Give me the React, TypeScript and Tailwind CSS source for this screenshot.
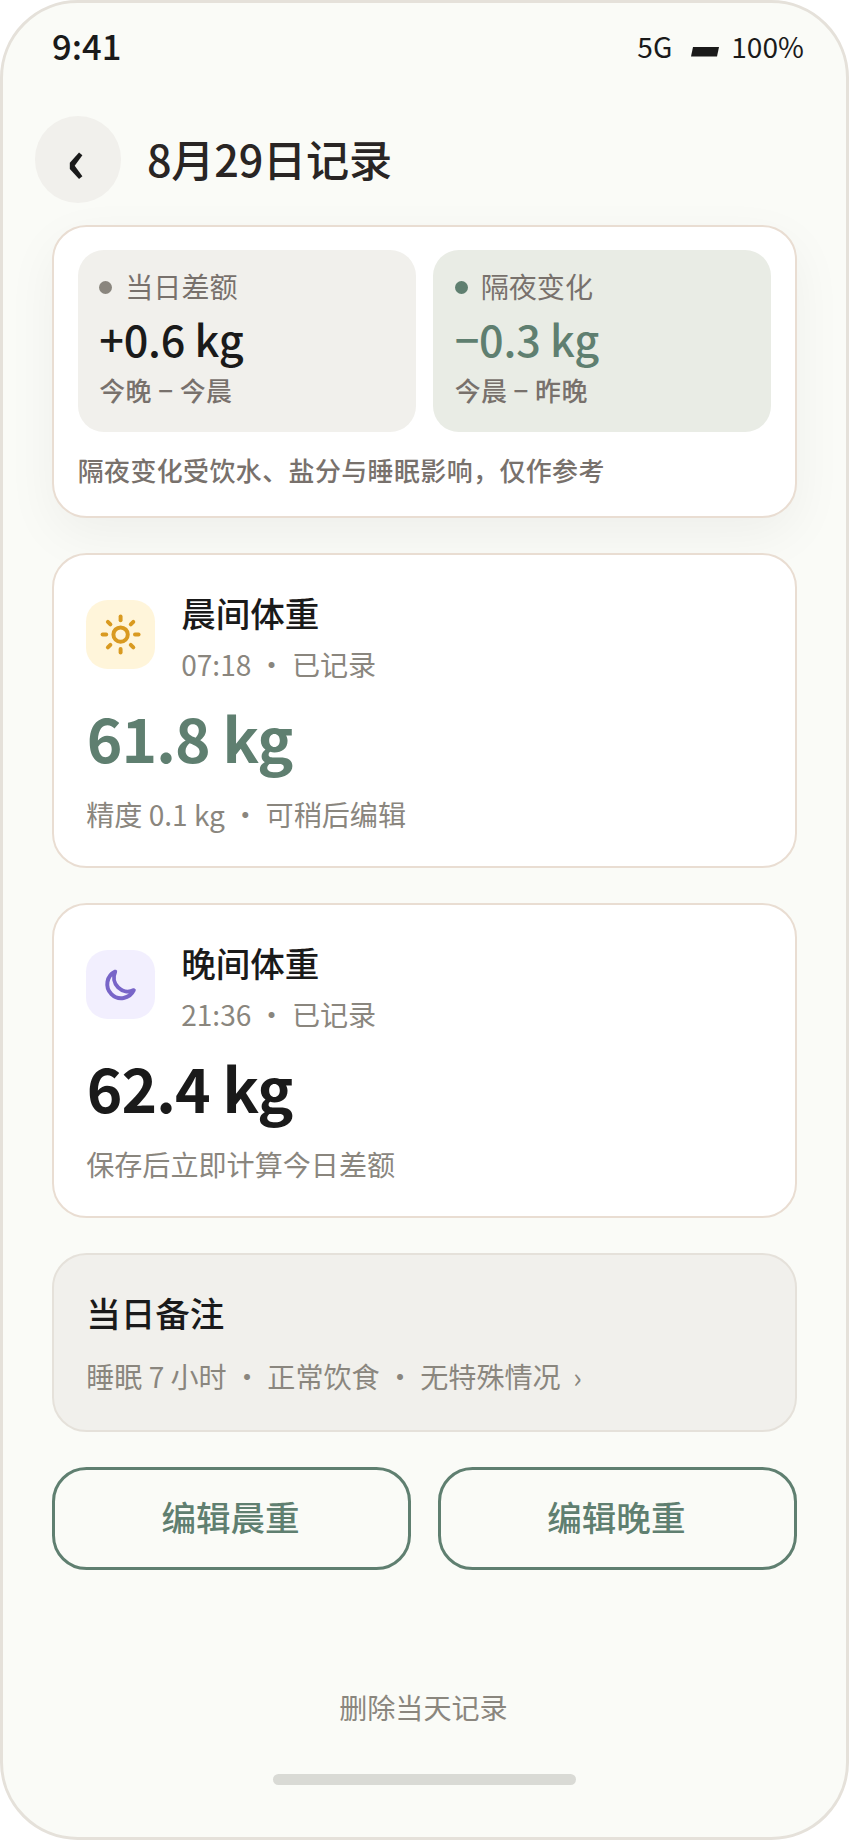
import React from "react";
import { Sun } from "lucide-react";

function MoonIcon() {
  return (
    <svg viewBox="0 0 24 24" className="size-[43.2px]" fill="none" stroke="currentColor" strokeWidth="2.2" strokeLinecap="round" strokeLinejoin="round">
      <path d="M9 4.8A7.75 7.75 0 1 0 19.35 15.1A7.8 7.8 0 0 1 9 4.8Z" />
    </svg>
  );
}

function Stat({ label, value, formula, box, dot, tone }: { label: string; value: string; formula: string; box: string; dot: string; tone: string }) {
  return (
    <div className={`h-[181.9px] flex-1 rounded-[26px] px-[21.6px] pt-[17.3px] ${box}`}>
      <div className="flex h-9 items-center gap-[13px]">
        <span className={`mt-[3px] size-[13px] rounded-full ${dot}`} />
        <span className="text-[28.08px] leading-9 text-[#78716c]">{label}</span>
      </div>
      <div className={`-mt-px text-[43.2px] leading-[70px] font-medium tracking-[-0.22px] ${tone}`}>{value}</div>
      <div className="text-[25.92px] leading-[33px] font-medium tracking-[0.43px] text-[#78716c]">{formula}</div>
    </div>
  );
}

function WeightCard({ icon, iconBox, title, time, value, tone, hint }: { icon: React.ReactNode; iconBox: string; title: string; time: string; value: string; tone: string; hint: string }) {
  return (
    <section className="h-[315.4px] rounded-[34.5px] border-2 border-[#e9ddd2] bg-white p-[32.4px]">
      <div className="flex items-center gap-[25.9px]">
        <div className={`mb-[3px] flex size-[69.1px] items-center justify-center rounded-[21.6px] ${iconBox}`}>{icon}</div>
        <div>
          <h2 className="text-[34.56px] leading-[50px] font-medium text-[#1a1a1a]">{title}</h2>
          <p className="mt-[7px] text-[28.08px] leading-[40.6px] text-[#8a867e]">{time}</p>
        </div>
      </div>
      <div className={`mt-[7.6px] pl-[0.5px] text-[60.48px] leading-[87.6px] font-bold tracking-[-0.92px] ${tone}`}>{value}</div>
      <p className="mt-[13.7px] text-[28.08px] leading-[40.6px] text-[#8a867e]">{hint}</p>
    </section>
  );
}

export default function App() {
  return (
    <div className="min-h-[1841px] bg-white font-['Noto_Sans_CJK_SC',sans-serif]">
      <main className="flex h-[1840.3px] w-[848.9px] flex-col overflow-hidden rounded-[77.8px] border-3 border-[#e5e1da] bg-[#fafbf7] text-[#1a1a1a]">
        <header className="flex h-[86px] shrink-0 items-center justify-between pr-[42px] pl-[49px]">
          <span className="text-[34.56px] font-medium">9:41</span>
          <span className="flex items-center text-[28.08px]">
            5G
            <svg viewBox="0 0 28 10" className="mt-[12px] mr-[12px] ml-[19px] h-[10px] w-[28px]">
              <path d="M2 0H28L26 9.5H0Z" fill="currentColor" />
            </svg>
            100%
          </span>
        </header>
        <div className="mt-[27.4px] ml-[31.6px] flex shrink-0 items-center gap-[25.9px]">
          <button className="flex size-[86.4px] items-center justify-center rounded-full bg-[#f1f0ec] pr-[3px] pb-[5px] text-[60.48px] leading-none font-bold">‹</button>
          <h1 className="pb-[2px] text-[43.2px] font-medium tracking-[-0.22px] text-[#292524]">8月29日记录</h1>
        </div>
        <div className="mt-[21.8px] flex flex-col gap-[34.6px] px-[48.8px]">
          <section className="h-[293.8px] rounded-[34.5px] border-2 border-[#e9ddd2] bg-white p-[23.9px] shadow-[0_17px_52px_rgba(0,0,0,0.05)]">
            <div className="flex gap-[17.3px]">
              <Stat label="当日差额" value="+0.6 kg" formula="今晚 − 今晨" box="bg-[#f1f0ec]" dot="bg-[#8a867e]" tone="text-[#1a1a1a]" />
              <Stat label="隔夜变化" value="−0.3 kg" formula="今晨 − 昨晚" box="bg-[#e9ece5]" dot="bg-[#5f7f70]" tone="text-[#5f7f70]" />
            </div>
            <p className="mt-[20.5px] text-[25.92px] leading-[34px] font-medium tracking-[0.45px] text-[#78716c]">隔夜变化受饮水、盐分与睡眠影响，仅作参考</p>
          </section>
          <WeightCard icon={<Sun className="size-[43.2px]" strokeWidth={2.2} />} iconBox="bg-[#fff5da] text-[#d99a20]" title="晨间体重" time="07:18 • 已记录" value="61.8 kg" tone="text-[#5f7f70]" hint="精度 0.1 kg • 可稍后编辑" />
          <WeightCard icon={<MoonIcon />} iconBox="bg-[#f2effe] text-[#7865c8]" title="晚间体重" time="21:36 • 已记录" value="62.4 kg" tone="text-[#1a1a1a]" hint="保存后立即计算今日差额" />
          <section className="h-[179.3px] rounded-[34.5px] border-2 border-[#e5e1da] bg-[#f1f0ec] p-[32.4px]">
            <h2 className="text-[34.56px] leading-[50px] font-medium">当日备注</h2>
            <p className="mt-[18.8px] text-[28.08px] leading-[40.6px] whitespace-pre text-[#8a867e]">睡眠 7 小时 • 正常饮食 • 无特殊情况  ›</p>
          </section>
          <div className="flex gap-[26.4px] text-[34.56px] font-medium text-[#5f7f70]">
            <button className="h-[103px] flex-1 rounded-[34.5px] border-3 border-[#5f7f70] pr-[2px] pb-[3px]">编辑晨重</button>
            <button className="h-[103px] flex-1 rounded-[34.5px] border-3 border-[#5f7f70] pr-[2px] pb-[3px]">编辑晚重</button>
          </div>
        </div>
        <button className="mt-[117.2px] self-center pr-[2px] text-[28.08px] leading-[40.6px] text-[#8a867e]">删除当天记录</button>
        <div className="mt-[46.8px] h-[10.8px] w-[302.4px] shrink-0 self-center rounded-full bg-[#d9dad5]" />
      </main>
    </div>
  );
}
